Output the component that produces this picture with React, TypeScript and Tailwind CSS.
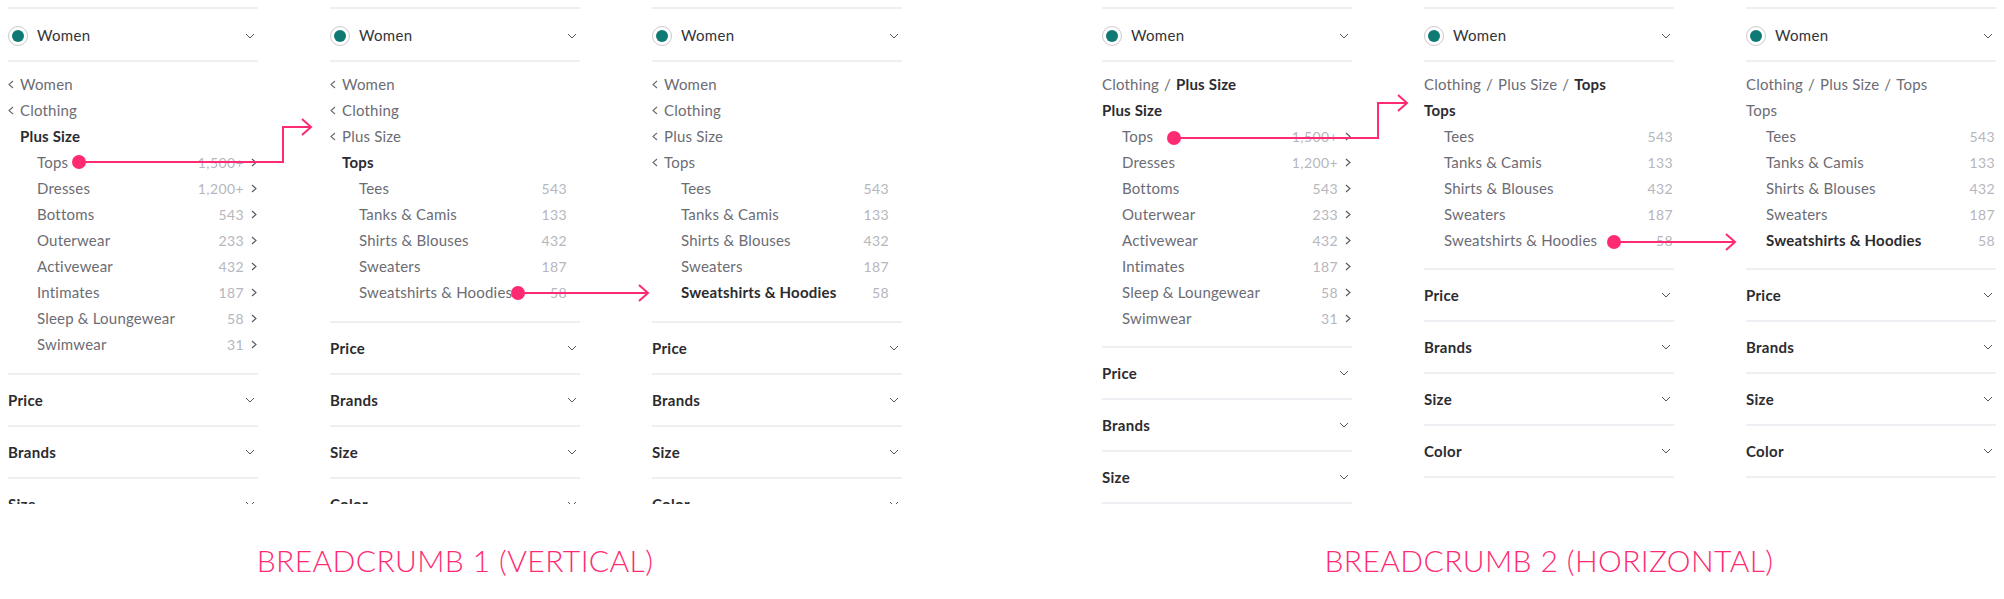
import React from "react";

type Item = { label: string; count: string; chevron?: boolean; bold?: boolean };

const categoryItems: Item[] = [
  { label: "Tops", count: "1,500+", chevron: true },
  { label: "Dresses", count: "1,200+", chevron: true },
  { label: "Bottoms", count: "543", chevron: true },
  { label: "Outerwear", count: "233", chevron: true },
  { label: "Activewear", count: "432", chevron: true },
  { label: "Intimates", count: "187", chevron: true },
  { label: "Sleep & Loungewear", count: "58", chevron: true },
  { label: "Swimwear", count: "31", chevron: true },
];

const topItems = (boldLast: boolean): Item[] => [
  { label: "Tees", count: "543" },
  { label: "Tanks & Camis", count: "133" },
  { label: "Shirts & Blouses", count: "432" },
  { label: "Sweaters", count: "187" },
  { label: "Sweatshirts & Hoodies", count: "58", bold: boldLast },
];

function ChevronDown() {
  return (
    <svg width="10" height="6" viewBox="0 0 10 6" fill="none">
      <path d="M1 1 L5 5 L9 1" stroke="#55555c" strokeWidth="1" />
    </svg>
  );
}

function ChevronRight() {
  return (
    <svg width="6" height="9" viewBox="0 0 6 9" fill="none">
      <path d="M1 1 L5 4.5 L1 8" stroke="#55555c" strokeWidth="1.1" />
    </svg>
  );
}

function ChevronLeft() {
  return (
    <svg width="6" height="9" viewBox="0 0 6 9" fill="none">
      <path d="M5 1 L1 4.5 L5 8" stroke="#6a6a72" strokeWidth="1.1" />
    </svg>
  );
}

function Header() {
  return (
    <div className="flex h-[53px] items-center justify-between border-t-2 border-[#eeeef3]">
      <div className="flex items-center gap-[9px] pt-[2px]">
        <div className="flex h-[20px] w-[20px] items-center justify-center rounded-full border border-[#c9c9d0]">
          <div className="h-[12px] w-[12px] rounded-full bg-[#0f7a73]" />
        </div>
        <span className="text-[15px] tracking-[0.3px] text-[#333338]">Women</span>
      </div>
      <div className="pr-[3px] pt-[2px]">
        <ChevronDown />
      </div>
    </div>
  );
}

function Filters({ names }: { names: string[] }) {
  return (
    <div>
      {names.map((n) => (
        <div
          key={n}
          className="flex h-[52px] items-center justify-between border-t-2 border-[#eeeef3]"
        >
          <span className="text-[15px] font-bold tracking-[0.3px] text-[#2b2b30]">{n}</span>
          <div className="pr-[3px]">
            <ChevronDown />
          </div>
        </div>
      ))}
      <div className="border-t-2 border-[#eeeef3]" />
    </div>
  );
}

function ItemRow({ item, indent, countRight }: { item: Item; indent: string; countRight: string }) {
  return (
    <div className={`flex h-[26px] items-center ${indent}`}>
      <span
        className={
          item.bold
            ? "flex-1 text-[15px] font-bold tracking-[0.2px] text-[#2b2b30]"
            : "flex-1 text-[15px] tracking-[0.2px] text-[#6c6c74]"
        }
      >
        {item.label}
      </span>
      <span className={`text-[14px] tracking-[0.4px] text-[#b6b6be] ${countRight}`}>{item.count}</span>
      {item.chevron ? (
        <span className="flex w-[14px] justify-end pr-[1px]">
          <ChevronRight />
        </span>
      ) : null}
    </div>
  );
}

function VerticalPanel({
  crumbs,
  current,
  items,
  leaf,
  filters,
}: {
  crumbs: string[];
  current?: string;
  items: Item[];
  leaf: boolean;
  filters: string[];
}) {
  return (
    <div className="w-[250px] shrink-0 pt-[7px]">
      <Header />
      <div className="border-t-2 border-[#eeeef3] pb-[16px] pt-[9px]">
        {crumbs.map((c) => (
          <div key={c} className="flex h-[26px] items-center gap-[6px]">
            <ChevronLeft />
            <span className="text-[15px] tracking-[0.2px] text-[#6c6c74]">{c}</span>
          </div>
        ))}
        {current ? (
          <div className="flex h-[26px] items-center pl-[12px]">
            <span className="text-[15px] font-bold tracking-[0.2px] text-[#2b2b30]">{current}</span>
          </div>
        ) : null}
        {items.map((it) => (
          <ItemRow key={it.label} item={it} indent="pl-[29px]" countRight={leaf ? "pr-[13px]" : ""} />
        ))}
      </div>
      <Filters names={filters} />
    </div>
  );
}

function HorizontalPanel({
  trail,
  boldLast,
  current,
  currentBold,
  items,
  leaf,
  filters,
}: {
  trail: string[];
  boldLast: boolean;
  current: string;
  currentBold: boolean;
  items: Item[];
  leaf: boolean;
  filters: string[];
}) {
  return (
    <div className="w-[250px] shrink-0 pt-[7px]">
      <Header />
      <div className="border-t-2 border-[#eeeef3] pb-[15px] pt-[9px]">
        <div className="flex h-[26px] items-center text-[15px] tracking-[0.2px] text-[#6c6c74]">
          {trail.map((t, i) => {
            const last = i === trail.length - 1;
            return (
              <React.Fragment key={t}>
                <span className={last && boldLast ? "font-bold text-[#2b2b30]" : ""}>{t}</span>
                {!last ? <span className="px-[5px]">/</span> : null}
              </React.Fragment>
            );
          })}
        </div>
        <div className="flex h-[26px] items-center">
          <span
            className={
              currentBold
                ? "text-[15px] font-bold tracking-[0.2px] text-[#2b2b30]"
                : "text-[15px] tracking-[0.2px] text-[#6c6c74]"
            }
          >
            {current}
          </span>
        </div>
        {items.map((it) => (
          <ItemRow key={it.label} item={it} indent="pl-[20px]" countRight={leaf ? "pr-[1px]" : ""} />
        ))}
      </div>
      <Filters names={filters} />
    </div>
  );
}

function Arrows() {
  const c = "#ff2a72";
  return (
    <svg className="pointer-events-none absolute left-0 top-0" width="2004" height="599" fill="none">
      <circle cx="79" cy="162" r="7" fill={c} />
      <path d="M79 162 H283 V127 H311" stroke={c} strokeWidth="2" />
      <path d="M302 119 L311 127 L302 135" stroke={c} strokeWidth="2" />

      <circle cx="518" cy="293" r="7" fill={c} />
      <path d="M518 293 H648" stroke={c} strokeWidth="2" />
      <path d="M639 285 L648 293 L639 301" stroke={c} strokeWidth="2" />

      <circle cx="1174" cy="138" r="7" fill={c} />
      <path d="M1174 138 H1378 V103 H1407" stroke={c} strokeWidth="2" />
      <path d="M1398 95 L1407 103 L1398 111" stroke={c} strokeWidth="2" />

      <circle cx="1614" cy="242" r="7" fill={c} />
      <path d="M1614 242 H1735" stroke={c} strokeWidth="2" />
      <path d="M1726 234 L1735 242 L1726 250" stroke={c} strokeWidth="2" />
    </svg>
  );
}

export default function App() {
  const allFilters = ["Price", "Brands", "Size", "Color"];
  return (
    <div
      className="relative h-[599px] w-[2004px] overflow-hidden bg-white"
      style={{ fontFamily: "Lato, 'Noto Sans', sans-serif" }}
    >
      <div className="flex gap-[200px] pl-[8px]">
        <div className="flex w-[894px] flex-col">
          <div className="flex h-[504px] gap-[72px] overflow-hidden">
            <VerticalPanel
              crumbs={["Women", "Clothing"]}
              current="Plus Size"
              items={categoryItems}
              leaf={false}
              filters={allFilters}
            />
            <VerticalPanel
              crumbs={["Women", "Clothing", "Plus Size"]}
              current="Tops"
              items={topItems(false)}
              leaf={true}
              filters={allFilters}
            />
            <VerticalPanel
              crumbs={["Women", "Clothing", "Plus Size", "Tops"]}
              items={topItems(true)}
              leaf={true}
              filters={allFilters}
            />
          </div>
          <div className="mt-[36px] text-center text-[30px] font-light leading-[40px] tracking-[0.4px] text-[#ff2a72]">
            BREADCRUMB 1 (VERTICAL)
          </div>
        </div>
        <div className="flex w-[894px] flex-col">
          <div className="flex h-[504px] gap-[72px] overflow-hidden">
            <HorizontalPanel
              trail={["Clothing", "Plus Size"]}
              boldLast={true}
              current="Plus Size"
              currentBold={true}
              items={categoryItems}
              leaf={false}
              filters={allFilters}
            />
            <HorizontalPanel
              trail={["Clothing", "Plus Size", "Tops"]}
              boldLast={true}
              current="Tops"
              currentBold={true}
              items={topItems(false)}
              leaf={true}
              filters={allFilters}
            />
            <HorizontalPanel
              trail={["Clothing", "Plus Size", "Tops"]}
              boldLast={false}
              current="Tops"
              currentBold={false}
              items={topItems(true)}
              leaf={true}
              filters={allFilters}
            />
          </div>
          <div className="mt-[36px] text-center text-[30px] font-light leading-[40px] tracking-[0.4px] text-[#ff2a72]">
            BREADCRUMB 2 (HORIZONTAL)
          </div>
        </div>
      </div>
      <Arrows />
    </div>
  );
}
